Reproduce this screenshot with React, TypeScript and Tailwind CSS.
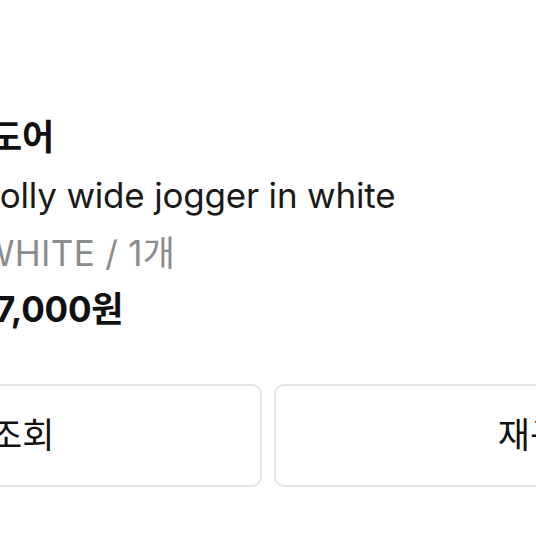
import React from 'react';

const FONT = "font-['Inter','Noto_Sans_CJK_KR',sans-serif]";

interface OrderItem {
  brand: string;
  name: string;
  option: string;
  price: string;
}

const item: OrderItem = {
  brand: '도어',
  name: 'Jolly wide jogger in white',
  option: 'WHITE / 1개',
  price: '17,000원',
};

// 주문 상품 정보
const ItemInfo: React.FC<{ item: OrderItem }> = ({ item }) => (
  <div className="pl-[262px] pt-[108px] text-[35px] leading-[58px] tracking-[-0.2px]">
    <p className="pl-[10px] font-bold text-[#111111]">{item.brand}</p>
    <p className="text-[#1a1a1a]">{item.name}</p>
    <p className="text-[#8c8c8c] tracking-[0.3px]">{item.option}</p>
    <p className="font-bold text-[#111111] leading-[55px]">{item.price}</p>
  </div>
);

// 하단 액션 버튼
const ActionButton: React.FC<{ label: string }> = ({ label }) => (
  <button className="flex-1 h-[103px] rounded-[10px] border-2 border-[#e4e4e4] bg-white text-[35px] text-[#111111] flex items-center justify-center">
    {label}
  </button>
);

export default function App() {
  return (
    <div className={`w-[536px] h-[536px] overflow-hidden bg-white ${FONT}`}>
      <div className="w-[1100px] -ml-[282px]">
        <ItemInfo item={item} />
        <div className="mt-[47px] flex gap-[12px]">
          <ActionButton label="배송조회" />
          <ActionButton label="재구매" />
        </div>
      </div>
    </div>
  );
}
